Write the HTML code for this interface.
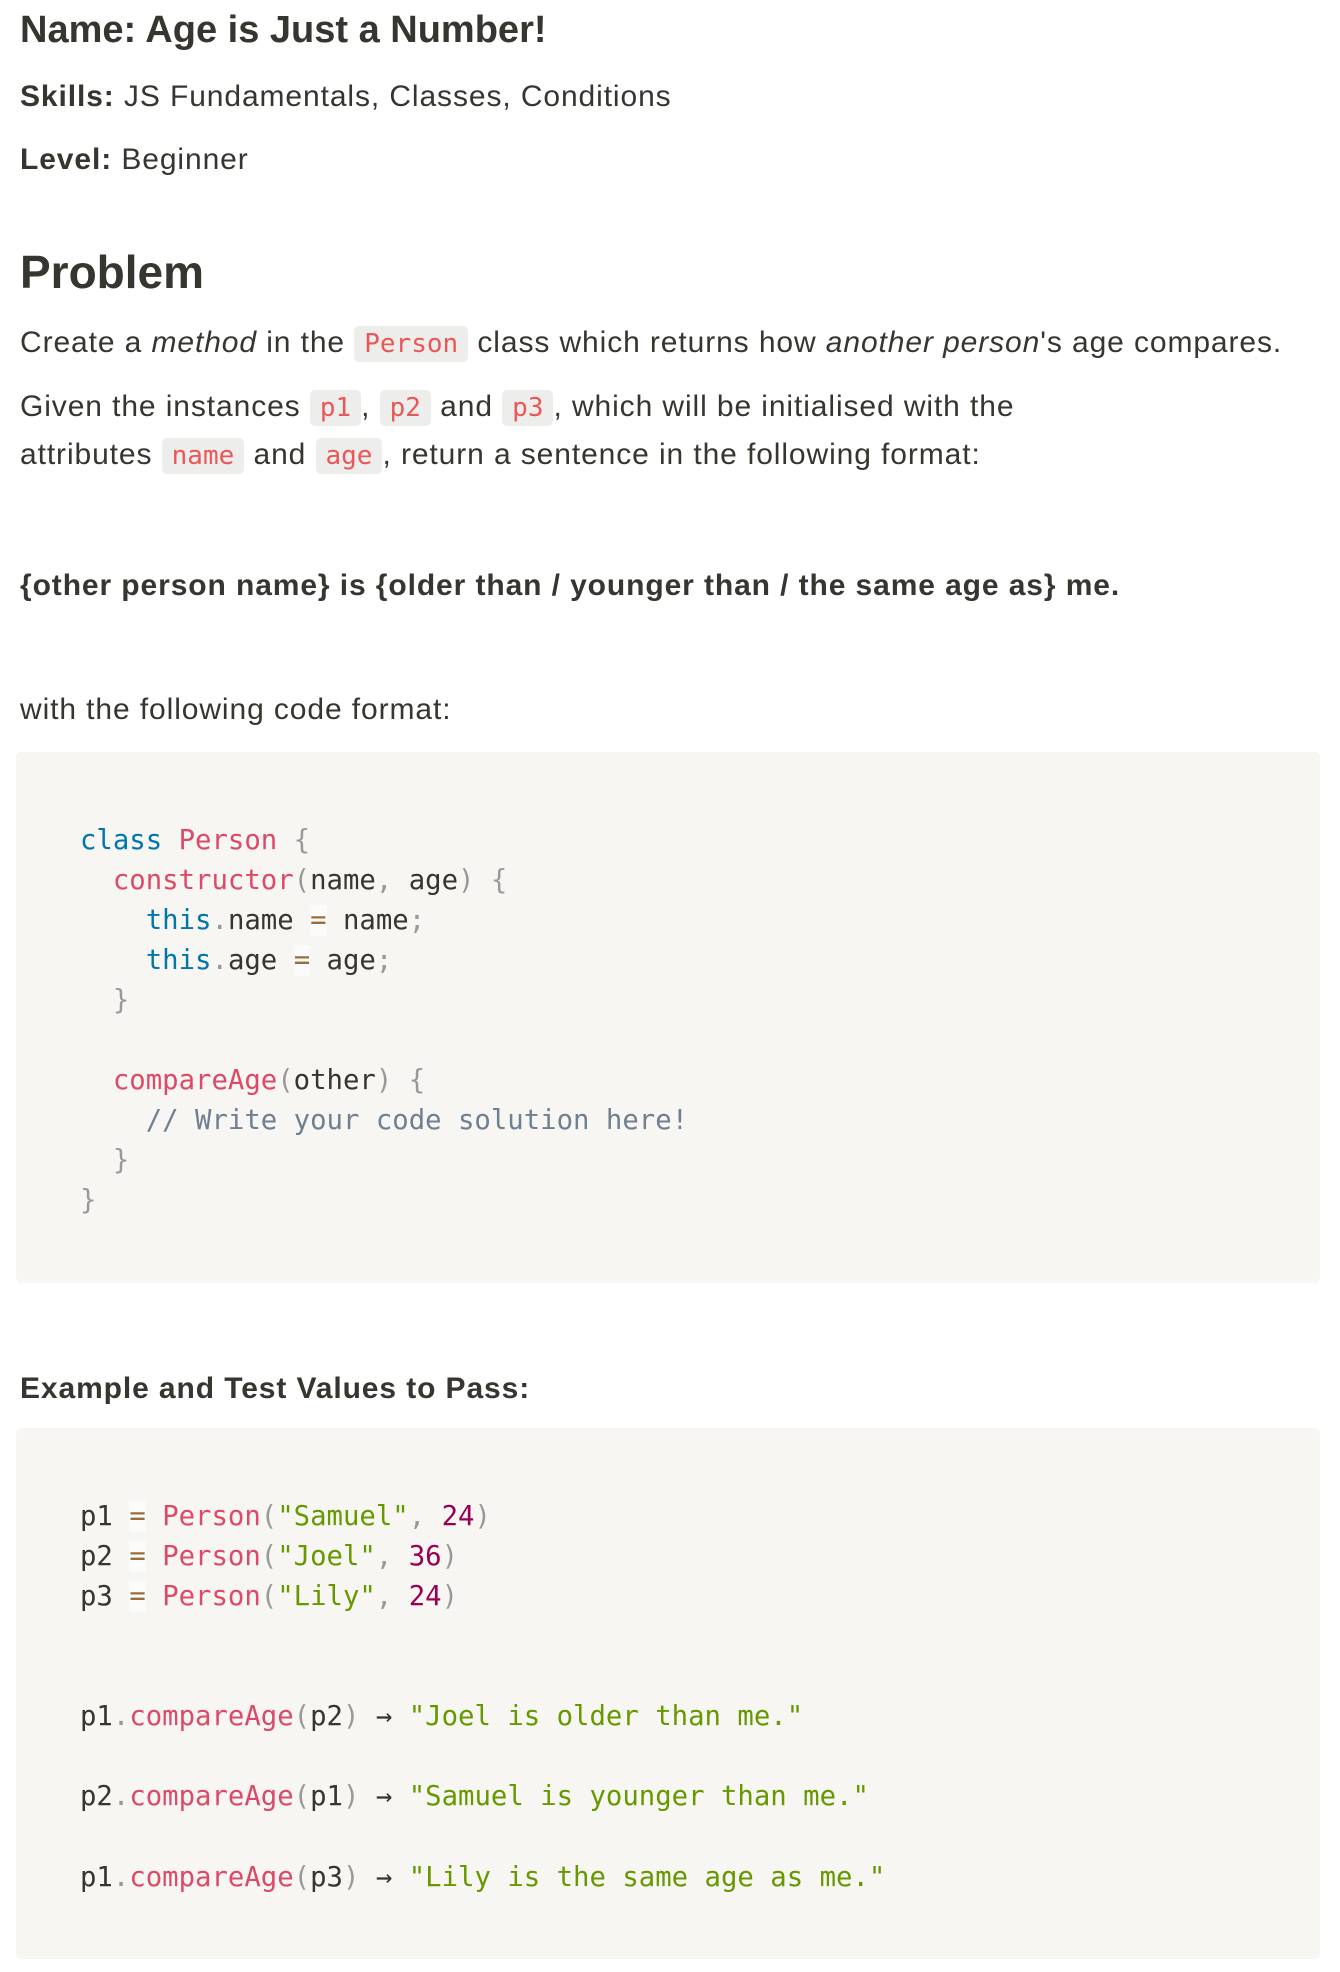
<!DOCTYPE html>
<html><head><meta charset="utf-8"><style>
body{margin:0;width:1340px;height:1972px;background:#fff;color:#37352f;font-family:"Liberation Sans",sans-serif;position:relative;overflow:hidden}
.l{position:absolute;left:20px;white-space:nowrap;font-size:30px;letter-spacing:0.9px;line-height:40px}
b{font-weight:bold}
code{font-family:"DejaVu Sans Mono",monospace;font-size:26px;letter-spacing:0;color:#eb5757;background:rgba(135,131,120,.15);border-radius:5px;padding:3px 10px}
.blk{position:absolute;left:16px;width:1304px;background:#f7f6f3;border-radius:5px}
.c{position:absolute;left:80px;white-space:pre;font-family:"DejaVu Sans Mono",monospace;font-size:27.3px;line-height:40px;color:#37352f}
.k{color:#07a}.f{color:#dd4a68}.p{color:#999}.o{color:#9a6e3a;background:rgba(255,255,255,.5)}.s{color:#690}.n{color:#905}.cm{color:#708090}
</style></head><body>
<div class="l" style="top:8px;font-size:38px;letter-spacing:0;line-height:44px;font-weight:bold">Name: Age is Just a Number!</div>
<div class="l" style="top:77px"><b>Skills:</b> JS Fundamentals, Classes, Conditions</div>
<div class="l" style="top:140px"><b>Level:</b> Beginner</div>
<div class="l" style="top:244px;font-size:46px;letter-spacing:0;line-height:56px;font-weight:bold">Problem</div>
<div class="l" style="top:323px">Create a <i>method</i> in the <code>Person</code> class which returns how <i>another person</i>'s age compares.</div>
<div class="l" style="top:387px">Given the instances <code>p1</code>, <code>p2</code> and <code>p3</code>, which will be initialised with the</div>
<div class="l" style="top:435px">attributes <code>name</code> and <code>age</code>, return a sentence in the following format:</div>
<div class="l" style="top:566px;font-weight:bold">{other person name} is {older than / younger than / the same age as} me.</div>
<div class="l" style="top:690px">with the following code format:</div>
<div class="blk" style="top:752px;height:531px"></div>
<div class="c" style="top:821px"><span class="k">class</span> <span class="f">Person</span> <span class="p">{</span></div>
<div class="c" style="top:861px">  <span class="f">constructor</span><span class="p">(</span>name<span class="p">,</span> age<span class="p">)</span> <span class="p">{</span></div>
<div class="c" style="top:901px">    <span class="k">this</span><span class="p">.</span>name <span class="o">=</span> name<span class="p">;</span></div>
<div class="c" style="top:941px">    <span class="k">this</span><span class="p">.</span>age <span class="o">=</span> age<span class="p">;</span></div>
<div class="c" style="top:981px">  <span class="p">}</span></div>
<div class="c" style="top:1061px">  <span class="f">compareAge</span><span class="p">(</span>other<span class="p">)</span> <span class="p">{</span></div>
<div class="c" style="top:1101px">    <span class="cm">// Write your code solution here!</span></div>
<div class="c" style="top:1141px">  <span class="p">}</span></div>
<div class="c" style="top:1181px"><span class="p">}</span></div>
<div class="l" style="top:1369px;font-weight:bold">Example and Test Values to Pass:</div>
<div class="blk" style="top:1428px;height:531px"></div>
<div class="c" style="top:1497px">p1 <span class="o">=</span> <span class="f">Person</span><span class="p">(</span><span class="s">"Samuel"</span><span class="p">,</span> <span class="n">24</span><span class="p">)</span></div>
<div class="c" style="top:1537px">p2 <span class="o">=</span> <span class="f">Person</span><span class="p">(</span><span class="s">"Joel"</span><span class="p">,</span> <span class="n">36</span><span class="p">)</span></div>
<div class="c" style="top:1577px">p3 <span class="o">=</span> <span class="f">Person</span><span class="p">(</span><span class="s">"Lily"</span><span class="p">,</span> <span class="n">24</span><span class="p">)</span></div>
<div class="c" style="top:1697px">p1<span class="p">.</span><span class="f">compareAge</span><span class="p">(</span>p2<span class="p">)</span> → <span class="s">"Joel is older than me."</span></div>
<div class="c" style="top:1777px">p2<span class="p">.</span><span class="f">compareAge</span><span class="p">(</span>p1<span class="p">)</span> → <span class="s">"Samuel is younger than me."</span></div>
<div class="c" style="top:1858px">p1<span class="p">.</span><span class="f">compareAge</span><span class="p">(</span>p3<span class="p">)</span> → <span class="s">"Lily is the same age as me."</span></div>
</body></html>
